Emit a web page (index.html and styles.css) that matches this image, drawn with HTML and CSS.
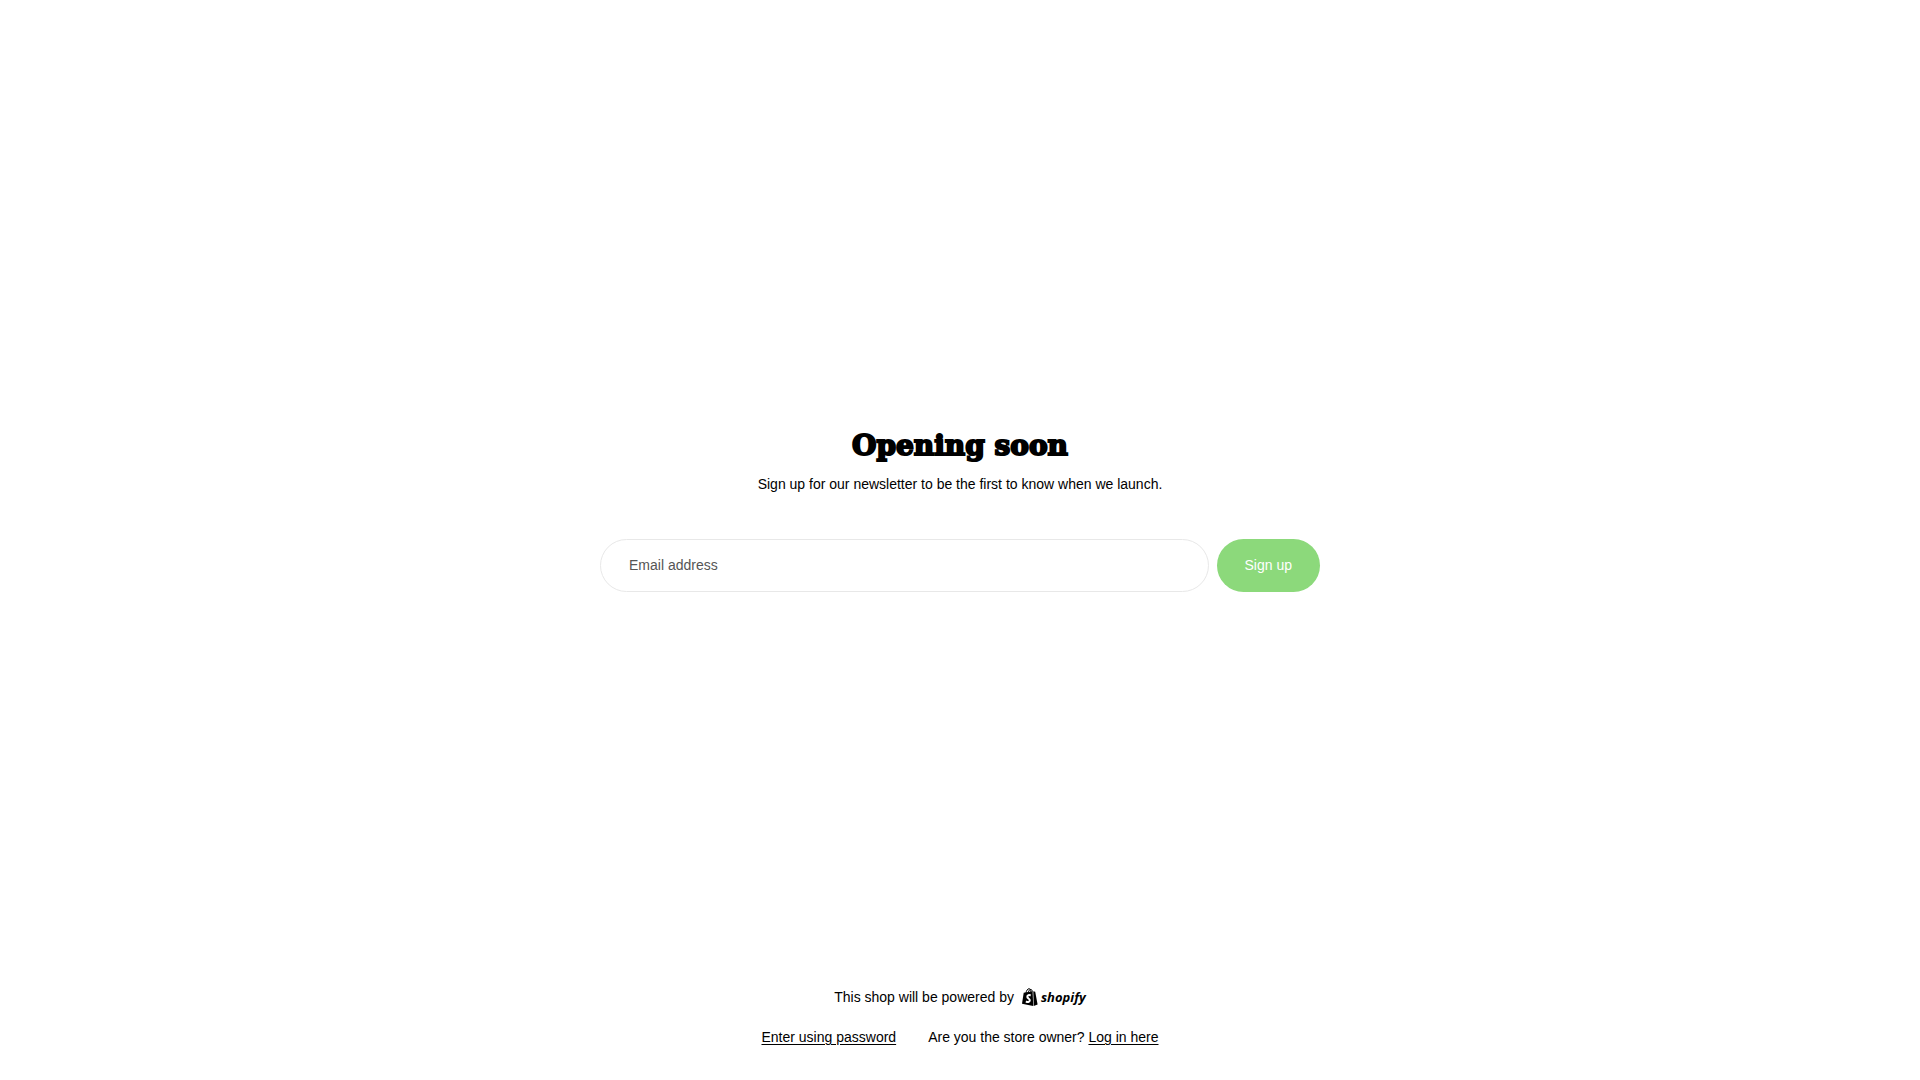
FILE: index.html
```
<!DOCTYPE html>
<html lang="en">
<head>
    <meta charset="UTF-8">
    <meta name="viewport" content="width=device-width, initial-scale=1.0">
    <title>Opening soon</title>
    <link rel="stylesheet" href="styles.css">
</head>
<body>
    <main class="main">
        <h1 class="title">Opening soon</h1>
        <p class="subtitle">Sign up for our newsletter to be the first to know when we launch.</p>
        <form class="newsletter">
            <input class="field" type="email" name="email" placeholder="Email address" aria-label="Email address">
            <button class="button" type="submit">Sign up</button>
        </form>
    </main>
    <footer class="footer">
        <div class="powered">
            <span>This shop will be powered by</span>
            <a class="shopify" href="#">
                <svg class="bag" viewBox="0 0 16 18" aria-hidden="true">
                    <path d="M1.700 4.800 10.600 3.200l.6 14.700L0 15.800z"/>
                    <path d="M11.300 3.200l1.900.6L15.600 16.600l-3.900 1.300z"/>
                    <path class="handle" d="M3.900 5.400C4.300 2.600 5.700.7 7 .7s1.800 1.300 1.900 3.200M6.200 4.600C6.600 2.500 7.800 1.400 8.800 1.400c.9 0 1.300.9 1.500 2.200"/>
                    <path class="letter" d="M8.700 7.500C7.200 6.700 5.200 7.100 5.300 8.900c.1 1.600 2.600 1.700 2.500 3.600-.1 1.700-2.200 1.900-3.900.8"/>
                </svg>
                <span class="wordmark">shopify</span>
            </a>
        </div>
        <div class="links">
            <a class="link" href="#">Enter using password</a>
            <span>Are you the store owner? <a class="link" href="#">Log in here</a></span>
        </div>
    </footer>
</body>
</html>
```
FILE: styles.css
```
* {
    box-sizing: border-box;
}
body {
    margin: 0;
    min-height: 100vh;
    display: flex;
    flex-direction: column;
    background: #fff;
    color: #000;
    font-family: "Liberation Sans", Arial, sans-serif;
    font-size: 14px;
    line-height: 20px;
}
.main {
    flex: 1;
    display: flex;
    flex-direction: column;
    align-items: center;
    justify-content: center;
    padding: 54px 24px 0;
}
.title {
    margin: 0 0 8px;
    font-family: "DejaVu Serif", serif;
    font-size: 28px;
    font-weight: 700;
    line-height: 40px;
    -webkit-text-stroke: 2px #000;
}
.subtitle {
    margin: 0 0 45px;
    text-align: center;
}
.newsletter {
    display: flex;
    gap: 8px;
    width: 100%;
    max-width: 720px;
}
.field,
.button {
    height: 53px;
    border-radius: 27px;
    font: inherit;
}
.field {
    flex: 1;
    min-width: 0;
    padding: 0 28px;
    border: 1px solid #e8e8e8;
    background: #fff;
}
.field::placeholder {
    color: #555;
    opacity: 1;
}
.button {
    padding: 0 28px;
    border: 0;
    background: #8cd97b;
    color: #fff;
    cursor: pointer;
}
.footer {
    display: flex;
    flex-direction: column;
    align-items: center;
    gap: 20px;
    padding: 24px 24px 33px;
}
.powered {
    display: flex;
    align-items: center;
    gap: 8px;
}
.shopify {
    display: flex;
    align-items: center;
    gap: 3px;
    color: #000;
    text-decoration: none;
}
.bag {
    width: 16px;
    height: 18px;
}
.handle {
    fill: none;
    stroke: #000;
}
.letter {
    fill: none;
    stroke: #fff;
    stroke-width: 2;
}
.wordmark {
    font-family: "Open Sans", sans-serif;
    font-size: 13px;
    font-style: italic;
    font-weight: 700;
}
.links {
    display: flex;
    flex-wrap: wrap;
    justify-content: center;
    gap: 8px 32px;
}
.link {
    color: #000;
    text-underline-offset: 2px;
}
```
